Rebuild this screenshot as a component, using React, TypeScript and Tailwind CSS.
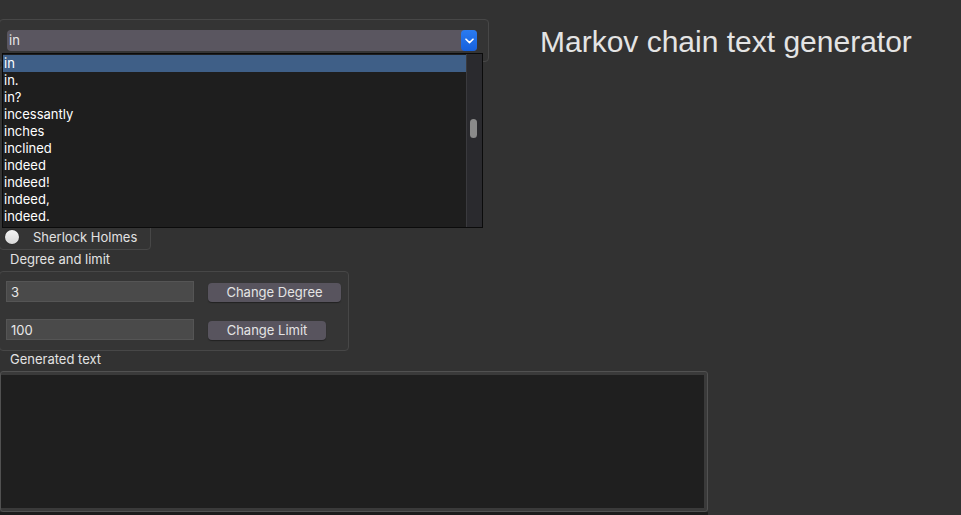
import { useState } from "react";

const words = [
  "in",
  "in.",
  "in?",
  "incessantly",
  "inches",
  "inclined",
  "indeed",
  "indeed!",
  "indeed,",
  "indeed.",
];

const ui = "font-['Inter','Noto_Sans',sans-serif]";

const App = () => {
  const [selected] = useState("in");
  const [degree, setDegree] = useState("3");
  const [limit, setLimit] = useState("100");

  return (
    <div
      className={`relative h-[515px] w-[961px] overflow-hidden bg-[#323232] text-[13px] text-[#e2e2e2] ${ui}`}
    >
      {/* top row: word picker + title */}
      <div className="mt-[19px] flex items-start">
        <div className="-ml-px h-[43px] w-[490px] rounded-[4px] border border-[#474747] bg-[#343434] pl-[7px] pt-[10px]">
          <div className="flex h-[21px] w-[470px] items-center rounded-[4px] bg-[#5a5660] pl-[2px]">
            <span className="flex-1 leading-none text-[#e8e8e8]">
              {selected}
            </span>
            <div className="flex h-[21px] w-[16px] items-center justify-center rounded-[4px] bg-gradient-to-b from-[#2a7bf0] to-[#1660dc]">
              <svg width="9" height="6" viewBox="0 0 9 6" fill="none">
                <path
                  d="M1 1.2 4.5 4.6 8 1.2"
                  stroke="white"
                  strokeWidth="1.6"
                  strokeLinecap="round"
                  strokeLinejoin="round"
                />
              </svg>
            </div>
          </div>
        </div>
        <h1 className="ml-[51px] mt-[6px] font-['Liberation_Sans',Arial,sans-serif] text-[30px] leading-[34px] text-[#e4e4e4]">
          Markov chain text generator
        </h1>
      </div>

      {/* text source radios */}
      <div className="-ml-px mt-[4px] flex h-[184px] w-[152px] flex-col justify-end rounded-[4px] border border-[#474747] bg-[#343434] pb-[4px]">
        <label className="flex items-center gap-[14px] pl-[5px]">
          <span className="h-[14px] w-[14px] rounded-full bg-gradient-to-b from-[#f4f4f4] to-[#d8d8d8] shadow-[0_0_1px_#000]" />
          <span className="leading-[16px] text-[#e2e2e2]">Sherlock Holmes</span>
        </label>
      </div>

      <div className="ml-[10px] mt-[1px] leading-[16px]">Degree and limit</div>

      <div className="-ml-px mt-[4px] h-[80px] w-[350px] rounded-[4px] border border-[#474747] bg-[#353535] pl-[6px] pt-[9px]">
        <div className="flex items-center gap-[14px]">
          <input
            value={degree}
            onChange={(e) => setDegree(e.target.value)}
            className="h-[21px] w-[188px] border border-[#555] bg-[#4a4a4a] px-[4px] text-[13px] text-[#e8e8e8] outline-none"
          />
          <button className="mt-[2px] h-[19px] w-[133px] rounded-[4px] bg-[#58545e] text-[13px] leading-none text-[#e4e4e4] shadow-[0_1px_1px_#222]">
            Change Degree
          </button>
        </div>
        <div className="mt-[17px] flex items-center gap-[14px]">
          <input
            value={limit}
            onChange={(e) => setLimit(e.target.value)}
            className="h-[21px] w-[188px] border border-[#555] bg-[#4a4a4a] px-[4px] text-[13px] text-[#e8e8e8] outline-none"
          />
          <button className="mt-[2px] h-[19px] w-[118px] rounded-[4px] bg-[#58545e] text-[13px] leading-none text-[#e4e4e4] shadow-[0_1px_1px_#222]">
            Change Limit
          </button>
        </div>
      </div>

      <div className="ml-[10px] leading-[16px]">Generated text</div>

      <div className="mt-[4px] h-[141px] w-[708px] rounded-[3px] border border-[#515151] bg-[#3a3a3a] pb-[3px] pr-[3px] pt-[3px]">
        <textarea className="block h-full w-full resize-none bg-[#1f1f1f] outline-none" />
      </div>
      <div className="h-[3px] w-[708px] bg-[#1c1c1c]" />

      {/* open dropdown list */}
      <div className="absolute left-[2px] top-[53px] flex h-[175px] w-[481px] border border-[#0b0b0b] bg-[#1e1e1e]">
        <ul className="flex-1 pt-[1px]">
          {words.map((w) => (
            <li
              key={w}
              className={`h-[17px] pl-[1px] leading-[17px] text-white ${
                w === selected ? "bg-[#3f5f87]" : ""
              }`}
            >
              {w}
            </li>
          ))}
        </ul>
        <div className="w-[16px] border-l border-[#3a3a3e] bg-[#2a2a2e] pl-[3px] pt-[65px]">
          <div className="h-[19px] w-[7px] rounded-full bg-[#8a8a8a]" />
        </div>
      </div>
    </div>
  );
};

export default App;
